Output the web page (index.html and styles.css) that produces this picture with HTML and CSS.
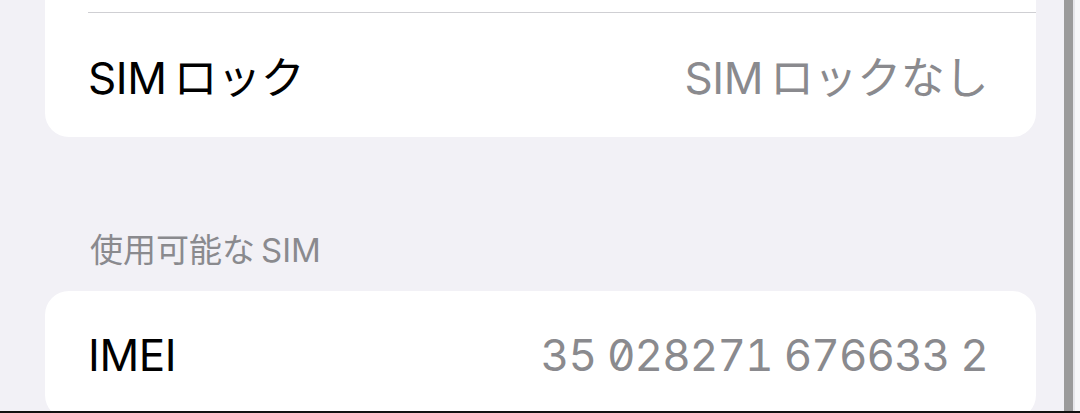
FILE: index.html
```html
<!DOCTYPE html>
<html lang="ja">
<head>
    <meta charset="UTF-8">
    <meta name="viewport" content="width=device-width, initial-scale=1.0">
    <title>情報</title>
    <link rel="stylesheet" href="styles.css">
</head>
<body>
    <div class="screen">
        <div class="content">
            <div class="group group-top">
                <div class="row-stub"></div>
                <div class="row">
                    <span class="label"><span class="latin">SIM</span>ロック</span>
                    <span class="value"><span class="latin">SIM</span>ロックなし</span>
                </div>
            </div>

            <h3 class="section-title">使用可能な<span class="latin-after">SIM</span></h3>

            <div class="group">
                <div class="row">
                    <span class="label">IMEI</span>
                    <span class="value number">35 028271 676633 2</span>
                </div>
            </div>
        </div>
        <div class="scroll-bar"></div>
        <div class="edge"></div>
    </div>
</body>
</html>
```

FILE: styles.css
```css
body { margin: 0; background: #f2f1f6; font-family: Inter, "Noto Sans CJK JP", sans-serif; overflow: hidden; }
.screen { display: flex; height: 411px; border-bottom: 2px solid #111; }
.content { flex: 0 0 1064px; box-sizing: border-box; padding: 0 28px 0 45px; overflow: hidden; }
.scroll-bar { flex: 0 0 9px; background: #9b9b9b; }
.edge { flex: 1; background: #f7f7f9; border-left: 2px solid #e6e6ea; }

.group { background: #fff; border-radius: 24px; overflow: hidden; }
.group-top { border-top-left-radius: 0; border-top-right-radius: 0; }
.row-stub { height: 12px; }

.row { display: flex; align-items: center; justify-content: space-between; height: 124px; margin-left: 43px; padding-right: 48px; }
.row-stub + .row { border-top: 1px solid #cfcfd3; }
.group:not(.group-top) .row { height: 128px; }

.label { font-size: 44px; color: #000; letter-spacing: -0.4px; }
.value { font-size: 44px; color: #8a8a8e; letter-spacing: -0.4px; }
.number { font-feature-settings: "zero" 1, "tnum" 1; letter-spacing: -0.9px; }
.latin { margin-right: 7px; }
.latin-after { margin-left: 6px; }

.section-title { margin: 0; padding: 94px 0 22px 45px; font-size: 33px; font-weight: 400; color: #8a8a8e; line-height: 38px; }
```
